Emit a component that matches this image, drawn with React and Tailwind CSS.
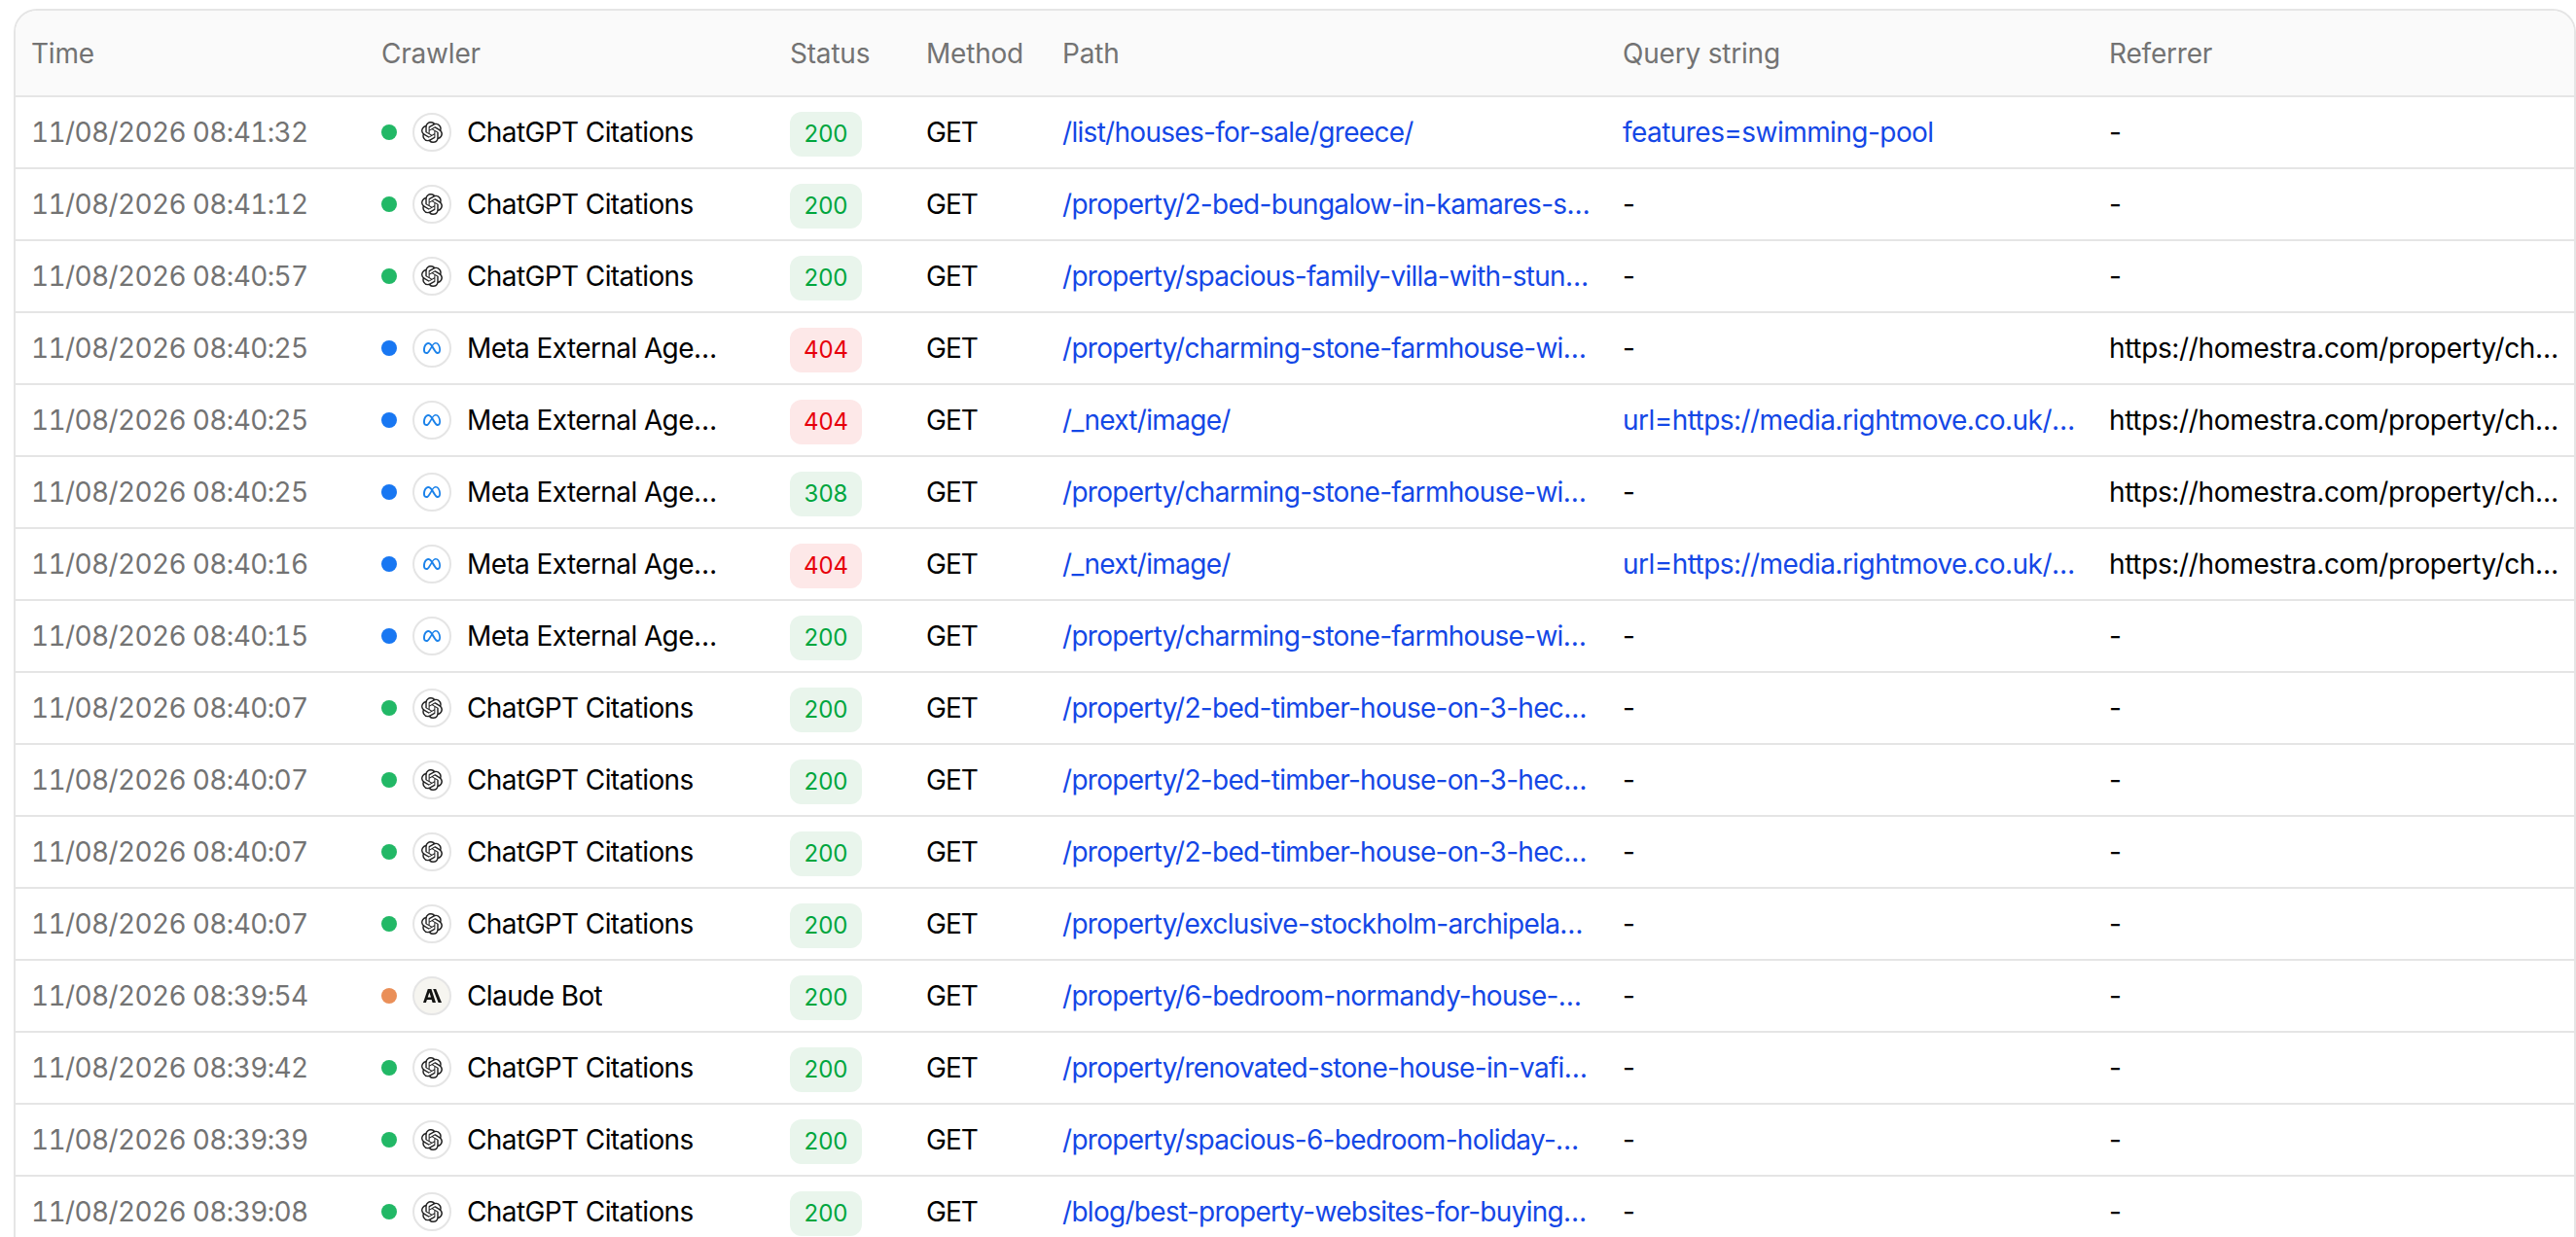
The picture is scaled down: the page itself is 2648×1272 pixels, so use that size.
import { SiOpenai, SiMeta } from "react-icons/si";

const chatgpt = { name: "ChatGPT Citations", dot: "bg-[#22b866]", kind: "openai" };
const meta = { name: "Meta External Agent Crawler", dot: "bg-[#1877f2]", kind: "meta" };
const claude = { name: "Claude Bot", dot: "bg-[#ea8f58]", kind: "claude" };

const charming = "/property/charming-stone-farmhouse-with-land-in-dordogne/";
const media = "url=https://media.rightmove.co.uk/dir/crop/10:9-16:9/property-photo.jpeg";
const refCharming = "https://homestra.com/property/charming-stone-farmhouse-with-land/";

const rows = [
  ["08:41:32", chatgpt, 200, "/list/houses-for-sale/greece/", "features=swimming-pool", "-"],
  ["08:41:12", chatgpt, 200, "/property/2-bed-bungalow-in-kamares-sifnos-greece/", "-", "-"],
  ["08:40:57", chatgpt, 200, "/property/spacious-family-villa-with-stunning-views/", "-", "-"],
  ["08:40:25", meta, 404, charming, "-", refCharming],
  ["08:40:25", meta, 404, "/_next/image/", media, refCharming],
  ["08:40:25", meta, 308, charming, "-", refCharming],
  ["08:40:16", meta, 404, "/_next/image/", media, refCharming],
  ["08:40:15", meta, 200, charming, "-", "-"],
  ["08:40:07", chatgpt, 200, "/property/2-bed-timber-house-on-3-hectares-in-sweden/", "-", "-"],
  ["08:40:07", chatgpt, 200, "/property/2-bed-timber-house-on-3-hectares-in-sweden/", "-", "-"],
  ["08:40:07", chatgpt, 200, "/property/2-bed-timber-house-on-3-hectares-in-sweden/", "-", "-"],
  ["08:40:07", chatgpt, 200, "/property/exclusive-stockholm-archipelago-island-home/", "-", "-"],
  ["08:39:54", claude, 200, "/property/6-bedroom-normandy-house-with-gardens/", "-", "-"],
  ["08:39:42", chatgpt, 200, "/property/renovated-stone-house-in-vafios-lesvos/", "-", "-"],
  ["08:39:39", chatgpt, 200, "/property/spacious-6-bedroom-holiday-home-in-spain/", "-", "-"],
  ["08:39:08", chatgpt, 200, "/blog/best-property-websites-for-buying-abroad/", "-", "-"],
];

const BotIcon = ({ kind }) => {
  if (kind === "openai") {
    return (
      <span className="flex h-10 w-10 shrink-0 items-center justify-center rounded-full border-2 border-[#e5e5e5] bg-white">
        <SiOpenai className="h-[22px] w-[22px] text-[#222]" />
      </span>
    );
  }
  if (kind === "meta") {
    return (
      <span className="flex h-10 w-10 shrink-0 items-center justify-center rounded-full border-2 border-[#e5e5e5] bg-white">
        <SiMeta className="h-[18px] w-[18px] text-[#1b82ea]" />
      </span>
    );
  }
  return (
    <span className="flex h-10 w-10 shrink-0 items-center justify-center rounded-full border-2 border-[#e5e5e5] bg-[#f6f5f0]">
      <svg viewBox="0 0 19 14" className="h-[14px] w-[19px] text-[#141413]" fill="currentColor">
        <path fillRule="evenodd" d="M4.8 0H8.4L13 14H9.6L8.7 11H3.9L2.9 14H0ZM6.4 3.5L4.7 8.6H8Z" />
        <path d="M10.2 0H13.2L19 14H15.6Z" />
      </svg>
    </span>
  );
};

const Status = ({ code }) => {
  const tone =
    code === 404
      ? "bg-[#fde8e8] text-[#e7000b]"
      : "bg-[#e9f5ec] text-[#00a63e]";
  return (
    <span className={`mt-1 inline-flex h-[46px] w-[74px] items-center justify-center rounded-xl text-2xl ${tone}`}>
      {code}
    </span>
  );
};

const headers = ["Time", "Crawler", "Status", "Method", "Path", "Query string", "Referrer"];
const widths = ["w-[360px]", "w-[420px]", "w-[140px]", "w-[140px]", "w-[576px]", "w-[500px]", "w-[496px]"];

export default function App() {
  return (
    <div className="h-screen w-full overflow-hidden bg-white font-['Inter',sans-serif] text-[28px] text-black">
      <div className="ml-[14px] mt-[9px] w-[2634px] rounded-t-3xl border-2 border-b-0 border-[#e5e5e5] overflow-hidden">
        <table className="w-full table-fixed border-separate border-spacing-0">
          <thead>
            <tr className="bg-[#fafafa]">
              {headers.map((h, i) => (
                <th key={h} className={`${widths[i]} h-[89px] border-b-2 border-[#e5e5e5] pl-4 text-left font-normal tracking-[-0.2px] text-[#737373]`}>
                  {h}
                </th>
              ))}
            </tr>
          </thead>
          <tbody>
            {rows.map((r, i) => (
              <tr key={i}>
                <td className="h-[74px] border-b-2 border-[#e5e5e5] pl-4 tabular-nums tracking-[-0.65px] text-[#737373]">11/08/2026 {r[0]}</td>
                <td className="border-b-2 border-[#e5e5e5] pl-4">
                  <div className="flex items-center gap-4">
                    <span className={`h-4 w-4 shrink-0 rounded-full ${r[1].dot}`} />
                    <BotIcon kind={r[1].kind} />
                    <span className="max-w-[260px] truncate tracking-[-0.6px]">{r[1].name}</span>
                  </div>
                </td>
                <td className="border-b-2 border-[#e5e5e5] pl-4">
                  <Status code={r[2]} />
                </td>
                <td className="border-b-2 border-[#e5e5e5] pl-4 tracking-[-1px]">GET</td>
                <td className="border-b-2 border-[#e5e5e5] pl-4 pr-[16px]">
                  <div className="truncate tracking-[-0.7px] text-[#1447e6]">{r[3]}</div>
                </td>
                <td className="border-b-2 border-[#e5e5e5] pl-4 pr-[16px]">
                  <div className={`truncate tracking-[-0.55px] ${r[4] === "-" ? "" : "text-[#1447e6]"}`}>{r[4]}</div>
                </td>
                <td className="border-b-2 border-[#e5e5e5] pl-4 pr-4">
                  <div className="truncate tracking-[-0.35px]">{r[5]}</div>
                </td>
              </tr>
            ))}
          </tbody>
        </table>
      </div>
    </div>
  );
}
